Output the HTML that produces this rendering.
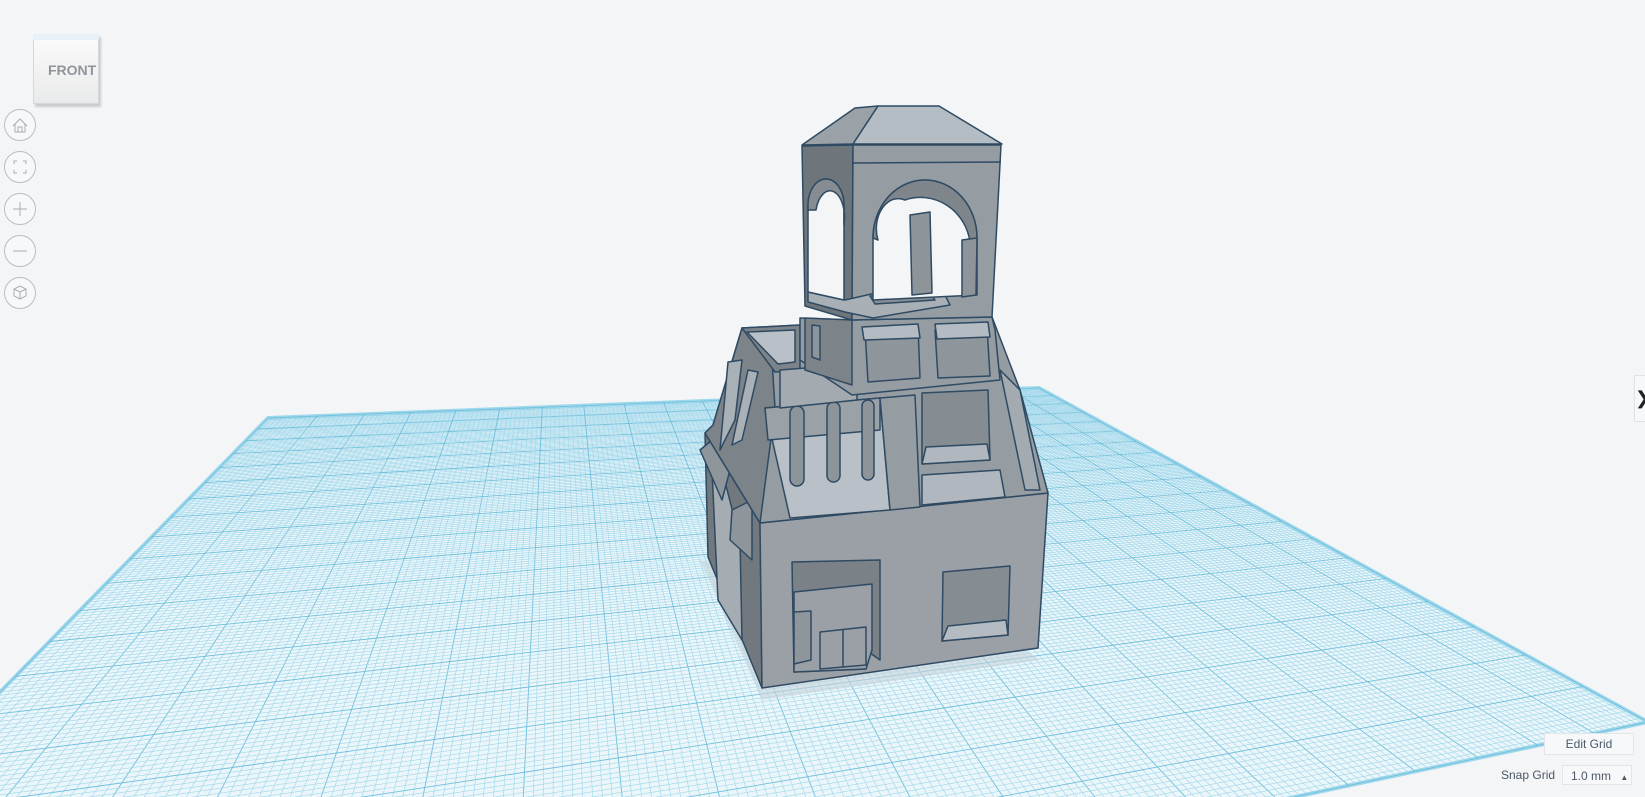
<!DOCTYPE html>
<html><head><meta charset="utf-8"><style>
html,body{margin:0;padding:0;background:#f4f5f6;width:1645px;height:797px;overflow:hidden;font-family:"Liberation Sans",sans-serif}
#v{position:absolute;left:0;top:0;overflow:hidden}
.btn{position:absolute;left:4px;width:32px;height:32px;border:1px solid #b9bec3;border-radius:50%;background:#f7f8f9;box-sizing:border-box}
.ui{position:absolute;color:#4a5866;font-size:12px}
</style></head><body>
<svg id="v" width="1645" height="797" viewBox="0 0 1645 797">
<g id="grid"></g>
<g stroke="#2f4a63" stroke-width="1.5" stroke-linejoin="round">
<polygon points="700,560 762,700 1040,660 1010,640" fill="#c6d3da" stroke="none" opacity=".6"/>
<!-- bottom block -->
<polygon points="705,433 760,523 762,688 708,557" fill="#71787e"/>
<polygon points="760,523 1048,493 1038,648 762,688" fill="#9aa0a6"/>
<polygon points="712,470 722,470 740,540 742,640 718,600" fill="#a5acb2"/>
<polygon points="700,450 712,440 730,470 722,500" fill="#8e959b"/>
<polygon points="732,510 752,500 752,560 730,540" fill="#8e959b"/>
<polygon points="943,572 1010,566 1008,635 942,641" fill="#858c92"/>
<polygon points="948,626 1006,620 1008,635 942,641" fill="#b4bbc2"/>
<polygon points="792,562 880,560 880,660 866,650 866,669 794,672" fill="#7a8187"/>
<polygon points="794,592 872,584 872,650 866,669 794,672" fill="#9aa0a6"/>
<polygon points="794,612 811,611 811,660 794,664" fill="#8e959b"/>
<polygon points="820,632 866,627 866,665 820,669" fill="#9aa0a6"/>
<line x1="843" y1="630" x2="843" y2="667"/>
<!-- mid section -->
<polygon points="742,328 800,325 852,320 992,317 1020,390 1048,493 760,523 705,433 713,425" fill="#959ca2"/>
<polygon points="742,328 772,360 775,408 760,523 705,433 713,425" fill="#7c8389"/>
<polygon points="728,362 742,360 735,420 720,450" fill="#a9b0b6"/>
<polygon points="748,370 758,372 742,440 732,445" fill="#a9b0b6"/>
<polygon points="765,408 880,398 890,510 790,518" fill="#b9c0c7"/>
<polygon points="765,408 880,398 880,430 768,440" fill="#9aa1a7"/>
<rect x="790" y="406" width="14" height="80" rx="7" fill="#8d949a"/>
<rect x="827" y="402" width="13" height="80" rx="6.5" fill="#8d949a"/>
<rect x="862" y="400" width="12" height="80" rx="6" fill="#8d949a"/>
<polygon points="880,398 915,395 920,507 890,510" fill="#959ca2"/>
<polygon points="922,393 988,390 990,460 922,464" fill="#858c92"/>
<polygon points="926,447 987,444 990,460 922,464" fill="#b0b7be"/>
<polygon points="922,475 1000,470 1005,497 922,505" fill="#b0b7be"/>
<polygon points="1000,370 1020,390 1040,490 1025,490" fill="#a3aab0"/>
<!-- balcony -->
<polygon points="742,328 800,325 800,370 775,372" fill="#7c8389"/>
<polygon points="747,332 795,330 795,362 778,364" fill="#b9c0c7"/>
<polygon points="780,370 857,364 857,400 780,408" fill="#a3aab0"/>
<!-- tower base -->
<polygon points="800,318 852,320 992,317 995,330 1000,380 852,395 800,360" fill="#959ca2"/>
<polygon points="805,318 852,320 852,385 805,370" fill="#7c8389"/>
<polygon points="812,325 820,326 820,360 812,357" fill="#8d949a"/>
<polygon points="865,330 918,326 920,378 868,382" fill="#8e959b"/>
<polygon points="862,327 918,324 920,338 864,340" fill="#b4bbc2"/>
<polygon points="935,330 987,327 990,376 938,378" fill="#8e959b"/>
<polygon points="935,324 988,322 990,337 937,339" fill="#b4bbc2"/>
<!-- tower -->
<polygon points="802,146 853,145 852,320 805,306" fill="#6e767c"/>
<polygon points="853,145 1001,145 992,317 852,320" fill="#959ca2"/>
<line x1="853" y1="163" x2="1001" y2="162"/>
<polygon points="808,292 845,300 880,292 945,295 950,305 873,318 845,312 808,302" fill="#a8afb5"/>
<polygon points="870,296 930,293 935,300 875,304" fill="#868d93"/>
<path d="M808,292 V205 A18,26 0 0 1 844,205 V300 Z" fill="#f4f5f6"/>
<path d="M808,210 V205 A18,26 0 0 1 844,205 V225 A12,22 0 0 0 816,210 Z" fill="#858c92"/>
<path d="M873,300 V238 A52,58 0 0 1 977,238 V295 Z" fill="#f4f5f6"/>
<path d="M873,238 A52,58 0 0 1 977,238 L970,242 A50,52 0 0 0 905,200 A22,30 0 0 0 878,240 Z" fill="#7e858b"/>
<polygon points="910,215 930,212 932,293 912,295" fill="#8d949a"/>
<polygon points="962,240 977,238 976,295 962,297" fill="#8d949a"/>
<!-- roof -->
<polygon points="802,145 855,108 878,106 853,144" fill="#9aa1a7"/>
<polygon points="878,106 939,106 1002,144 853,144" fill="#b4bcc4"/>
</g>
</svg>
<div style="position:absolute;left:33px;top:34px;width:64px;height:68px;background:linear-gradient(#fbfbfb,#e9eaeb);border:1px solid #d6d9dc;box-shadow:2px 3px 2px #c9cccf"></div>
<div style="position:absolute;left:33px;top:34px;width:66px;height:6px;background:#e7f1f7"></div>
<div style="position:absolute;left:48px;top:62px;font-size:14px;font-weight:bold;color:#8e959b">FRONT</div>
<div class="btn" style="top:109px"><svg width="30" height="30"><path d="M8,16 L15,9 L22,16 M10,14 V22 H20 V14 M13,22 V17 H17 V22" fill="none" stroke="#a8adb2"/></svg></div>
<div class="btn" style="top:151px"><svg width="30" height="30"><path d="M9,12 V9 H12 M18,9 H21 V12 M21,18 V21 H18 M12,21 H9 V18" fill="none" stroke="#a8adb2"/></svg></div>
<div class="btn" style="top:193px"><svg width="30" height="30"><path d="M15,8 V22 M8,15 H22" stroke="#a8adb2"/></svg></div>
<div class="btn" style="top:235px"><svg width="30" height="30"><path d="M8,15 H22" stroke="#a8adb2"/></svg></div>
<div class="btn" style="top:277px"><svg width="30" height="30"><path d="M15,8 L21,11 V18 L15,21 L9,18 V11 Z M9,11 L15,14 L21,11 M15,14 V21" fill="none" stroke="#a8adb2"/></svg></div>
<div style="position:absolute;left:1634px;top:375px;width:11px;height:45px;background:#f7f8f9;border:1px solid #e0e3e6;color:#222;font-size:18px;line-height:45px;overflow:hidden">❯</div>
<div class="ui" style="left:1544px;top:733px;width:88px;height:20px;background:#f7f8f9;border:1px solid #e3e6e9;text-align:center;line-height:20px">Edit Grid</div>
<div class="ui" style="left:1501px;top:767px;line-height:16px">Snap Grid</div>
<div class="ui" style="left:1562px;top:765px;width:70px;height:20px;background:#f7f8f9;border:1px solid #e3e6e9;line-height:20px;padding-left:8px;box-sizing:border-box">1.0 mm <span style="font-size:8px;margin-left:6px">▲</span></div>
<script>
(function(){
var A=[268,418],B=[1039,388],C=[1648,722],D=[-468,1171];
var x0=A[0],y0=A[1],x1=B[0],y1=B[1],x2=C[0],y2=C[1],x3=D[0],y3=D[1];
var dx1=x1-x2,dx2=x3-x2,dy1=y1-y2,dy2=y3-y2,sx=x0-x1+x2-x3,sy=y0-y1+y2-y3;
var den=dx1*dy2-dx2*dy1,g=(sx*dy2-dx2*sy)/den,h=(dx1*sy-sx*dy1)/den;
var a=x1-x0+g*x1,b=x3-x0+h*x3,c=x0,d=y1-y0+g*y1,e=y3-y0+h*y3,f=y0;
function P(u,v){var w=g*u+h*v+1;return [(a*u+b*v+c)/w,(d*u+e*v+f)/w];}
var s='<polygon points="'+[A,B,C,D].map(p=>p.join(',')).join(' ')+'" fill="#eaf6fa" stroke="#9fd8ec" stroke-width="4" stroke-linejoin="round"/>';
var N=200;
for(var i=0;i<=N;i++){var t=i/N,maj=i%10==0;
var st=maj?'stroke="#6fbfdc" stroke-width="0.9"':'stroke="#9fd6ea" stroke-width="0.6"';
var p=P(t,0),q=P(t,1);s+='<line x1="'+p[0].toFixed(1)+'" y1="'+p[1].toFixed(1)+'" x2="'+q[0].toFixed(1)+'" y2="'+q[1].toFixed(1)+'" '+st+'/>';
p=P(0,t);q=P(1,t);s+='<line x1="'+p[0].toFixed(1)+'" y1="'+p[1].toFixed(1)+'" x2="'+q[0].toFixed(1)+'" y2="'+q[1].toFixed(1)+'" '+st+'/>';}
document.getElementById('grid').innerHTML=s;
})();
</script>
</body></html>
